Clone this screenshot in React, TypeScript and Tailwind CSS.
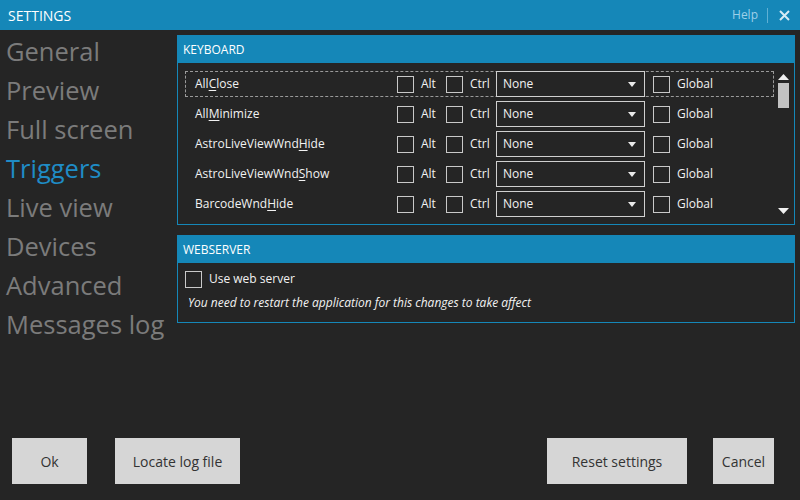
import React from "react";

const rows: { pre: string; u: string; post: string }[] = [
  { pre: "All", u: "C", post: "lose" },
  { pre: "All", u: "M", post: "inimize" },
  { pre: "AstroLiveViewWnd", u: "H", post: "ide" },
  { pre: "AstroLiveViewWnd", u: "S", post: "how" },
  { pre: "BarcodeWnd", u: "H", post: "ide" },
];

const menu = ["General", "Preview", "Full screen", "Triggers", "Live view", "Devices", "Advanced", "Messages log"];

function Box() {
  return <div className="w-[17px] h-[17px] border border-[#c9c9c9] shrink-0" />;
}

export default function App() {
  return (
    <div
      className="w-[800px] h-[500px] bg-[#252525] flex flex-col overflow-hidden text-[#f2f2f2]"
      style={{ fontFamily: "'Open Sans', 'Noto Sans', sans-serif" }}
    >
      {/* Title bar */}
      <div className="h-[30px] bg-[#1587b8] flex items-center pl-[8px] pr-[10px] shrink-0">
        <span className="text-[14px] text-white">SETTINGS</span>
        <div className="flex-1" />
        <span className="text-[12px] text-[#9dd0e8]">Help</span>
        <div className="w-px h-[15px] bg-[#5fb0d4] ml-[9px] mr-[11px]" />
        <svg width="11" height="11" viewBox="0 0 11 11">
          <path d="M1 1 L10 10 M10 1 L1 10" stroke="#d6ebf5" strokeWidth="2" />
        </svg>
      </div>

      <div className="flex flex-1 min-h-0">
        {/* Left menu */}
        <div className="w-[177px] shrink-0 flex flex-col pl-[6px] pt-[2px]">
          {menu.map((m) => (
            <div
              key={m}
              className={`h-[39px] leading-[39px] text-[25.5px] whitespace-nowrap ${m === "Triggers" ? "text-[#1f8cc6]" : "text-[#7b7b7b]"}`}
            >
              {m}
            </div>
          ))}
        </div>

        {/* Right content */}
        <div className="flex-1 flex flex-col pt-[5px] pr-[5px]">
          {/* Keyboard panel */}
          <div className="border border-[#1587b8] h-[190px] flex flex-col">
            <div className="h-[27px] bg-[#1587b8] flex items-center pl-[5px] text-[12px] text-white shrink-0">KEYBOARD</div>
            <div className="flex flex-1 min-h-0">
              <div className="flex-1 flex flex-col pl-[7px] pt-[6px]">
                {rows.map((r, i) => (
                  <div key={i} className="h-[30px] py-[2px] shrink-0">
                    <div
                      className={`h-[26px] flex items-center border border-dashed ${i === 0 ? "border-[#9a9a9a]" : "border-transparent"}`}
                    >
                      <div className="w-[211px] text-[12px] whitespace-nowrap pl-[9px]">
                        {r.pre}
                        <span className="underline underline-offset-2">{r.u}</span>
                        {r.post}
                      </div>
                      <Box />
                      <span className="text-[12px] ml-[7px] w-[25px]">Alt</span>
                      <Box />
                      <span className="text-[12px] ml-[7px] w-[26px]">Ctrl</span>
                      <div className="w-[149px] h-[26px] -my-px border border-[#d0d0d0] flex items-center pl-[6px] pr-[8px] text-[12px] shrink-0">
                        <span className="flex-1">None</span>
                        <svg width="8" height="5" viewBox="0 0 8 5">
                          <path d="M0 0 L8 0 L4 5 Z" fill="#eaeaea" />
                        </svg>
                      </div>
                      <div className="ml-[8px] flex items-center">
                        <Box />
                        <span className="text-[12px] ml-[7px] w-[96px]">Global</span>
                      </div>
                    </div>
                  </div>
                ))}
              </div>
              {/* Scrollbar */}
              <div className="w-[20px] flex flex-col items-center pt-[11px] pb-[10px] pr-[2px]">
                <svg width="11" height="6" viewBox="0 0 11 6">
                  <path d="M0 6 L11 6 L5.5 0 Z" fill="#f0f0f0" />
                </svg>
                <div className="w-[11px] h-[25px] bg-[#c2c2c2] mt-[3px]" />
                <div className="flex-1" />
                <svg width="11" height="6" viewBox="0 0 11 6">
                  <path d="M0 0 L11 0 L5.5 6 Z" fill="#f0f0f0" />
                </svg>
              </div>
            </div>
          </div>

          {/* Webserver panel */}
          <div className="border border-[#1587b8] h-[88px] flex flex-col mt-[10px]">
            <div className="h-[27px] bg-[#1587b8] flex items-center pl-[5px] text-[12px] text-white shrink-0">WEBSERVER</div>
            <div className="flex flex-col pl-[7px] pt-[7px]">
              <div className="flex items-center">
                <Box />
                <span className="text-[12px] ml-[7px]">Use web server</span>
              </div>
              <div className="text-[12px] italic mt-[6px] pl-[3px]">You need to restart the application for this changes to take affect</div>
            </div>
          </div>
        </div>
      </div>

      {/* Buttons */}
      <div className="h-[62px] shrink-0 flex items-start pl-[12px] pr-[26px] text-[14px] text-[#333333]">
        <button className="w-[75px] h-[46px] bg-[#d6d6d6]">Ok</button>
        <button className="w-[125px] h-[46px] bg-[#d6d6d6] ml-[28px]">Locate log file</button>
        <div className="flex-1" />
        <button className="w-[140px] h-[46px] bg-[#d6d6d6]">Reset settings</button>
        <button className="w-[61px] h-[46px] bg-[#d6d6d6] ml-[26px]">Cancel</button>
      </div>
    </div>
  );
}
